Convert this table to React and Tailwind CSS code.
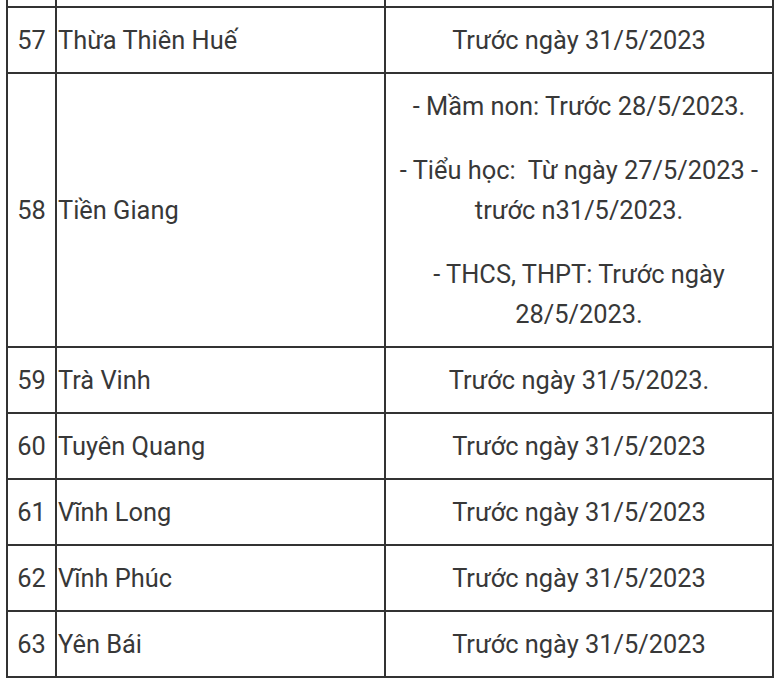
import React from "react";

const rows = [
  { n: "57", name: "Thừa Thiên Huế", paras: ["Trước ngày 31/5/2023"] },
  {
    n: "58",
    name: "Tiền Giang",
    paras: [
      "- Mầm non: Trước 28/5/2023.",
      "- Tiểu học:\u00a0 Từ ngày 27/5/2023 - trước n31/5/2023.",
      "- THCS, THPT: Trước ngày 28/5/2023.",
    ],
  },
  { n: "59", name: "Trà Vinh", paras: ["Trước ngày 31/5/2023."] },
  { n: "60", name: "Tuyên Quang", paras: ["Trước ngày 31/5/2023"] },
  { n: "61", name: "Vĩnh Long", paras: ["Trước ngày 31/5/2023"] },
  { n: "62", name: "Vĩnh Phúc", paras: ["Trước ngày 31/5/2023"] },
  { n: "63", name: "Yên Bái", paras: ["Trước ngày 31/5/2023"] },
];

export default function App() {
  return (
    <div
      className="min-h-[683px] bg-white text-[#383838] text-[25.4px] leading-[40px]"
      style={{ fontFamily: "Roboto, 'Liberation Sans', sans-serif" }}
    >
      <div className="ml-[6px] w-[768px] border-x-2 border-b-2 border-[#333333]">
        <div className="flex h-[8px] border-b-2 border-[#333333]">
          <div className="w-[49px] shrink-0 border-r-2 border-[#333333]" />
          <div className="w-[329px] shrink-0 border-r-2 border-[#333333]" />
          <div className="flex-1" />
        </div>
        {rows.map((r, i) => (
          <div
            key={r.n}
            className={
              "flex " + (i < rows.length - 1 ? "border-b-2 border-[#333333]" : "")
            }
          >
            <div className="w-[49px] shrink-0 border-r-2 border-[#333333] flex items-center justify-center">
              {r.n}
            </div>
            <div className="w-[329px] shrink-0 border-r-2 border-[#333333] flex items-center pl-[1px]">
              {r.name}
            </div>
            <div className="flex-1 py-[12px] px-[6px] text-center flex flex-col gap-[24px]">
              {r.paras.map((p, j) => (
                <p key={j}>{p}</p>
              ))}
            </div>
          </div>
        ))}
      </div>
    </div>
  );
}
